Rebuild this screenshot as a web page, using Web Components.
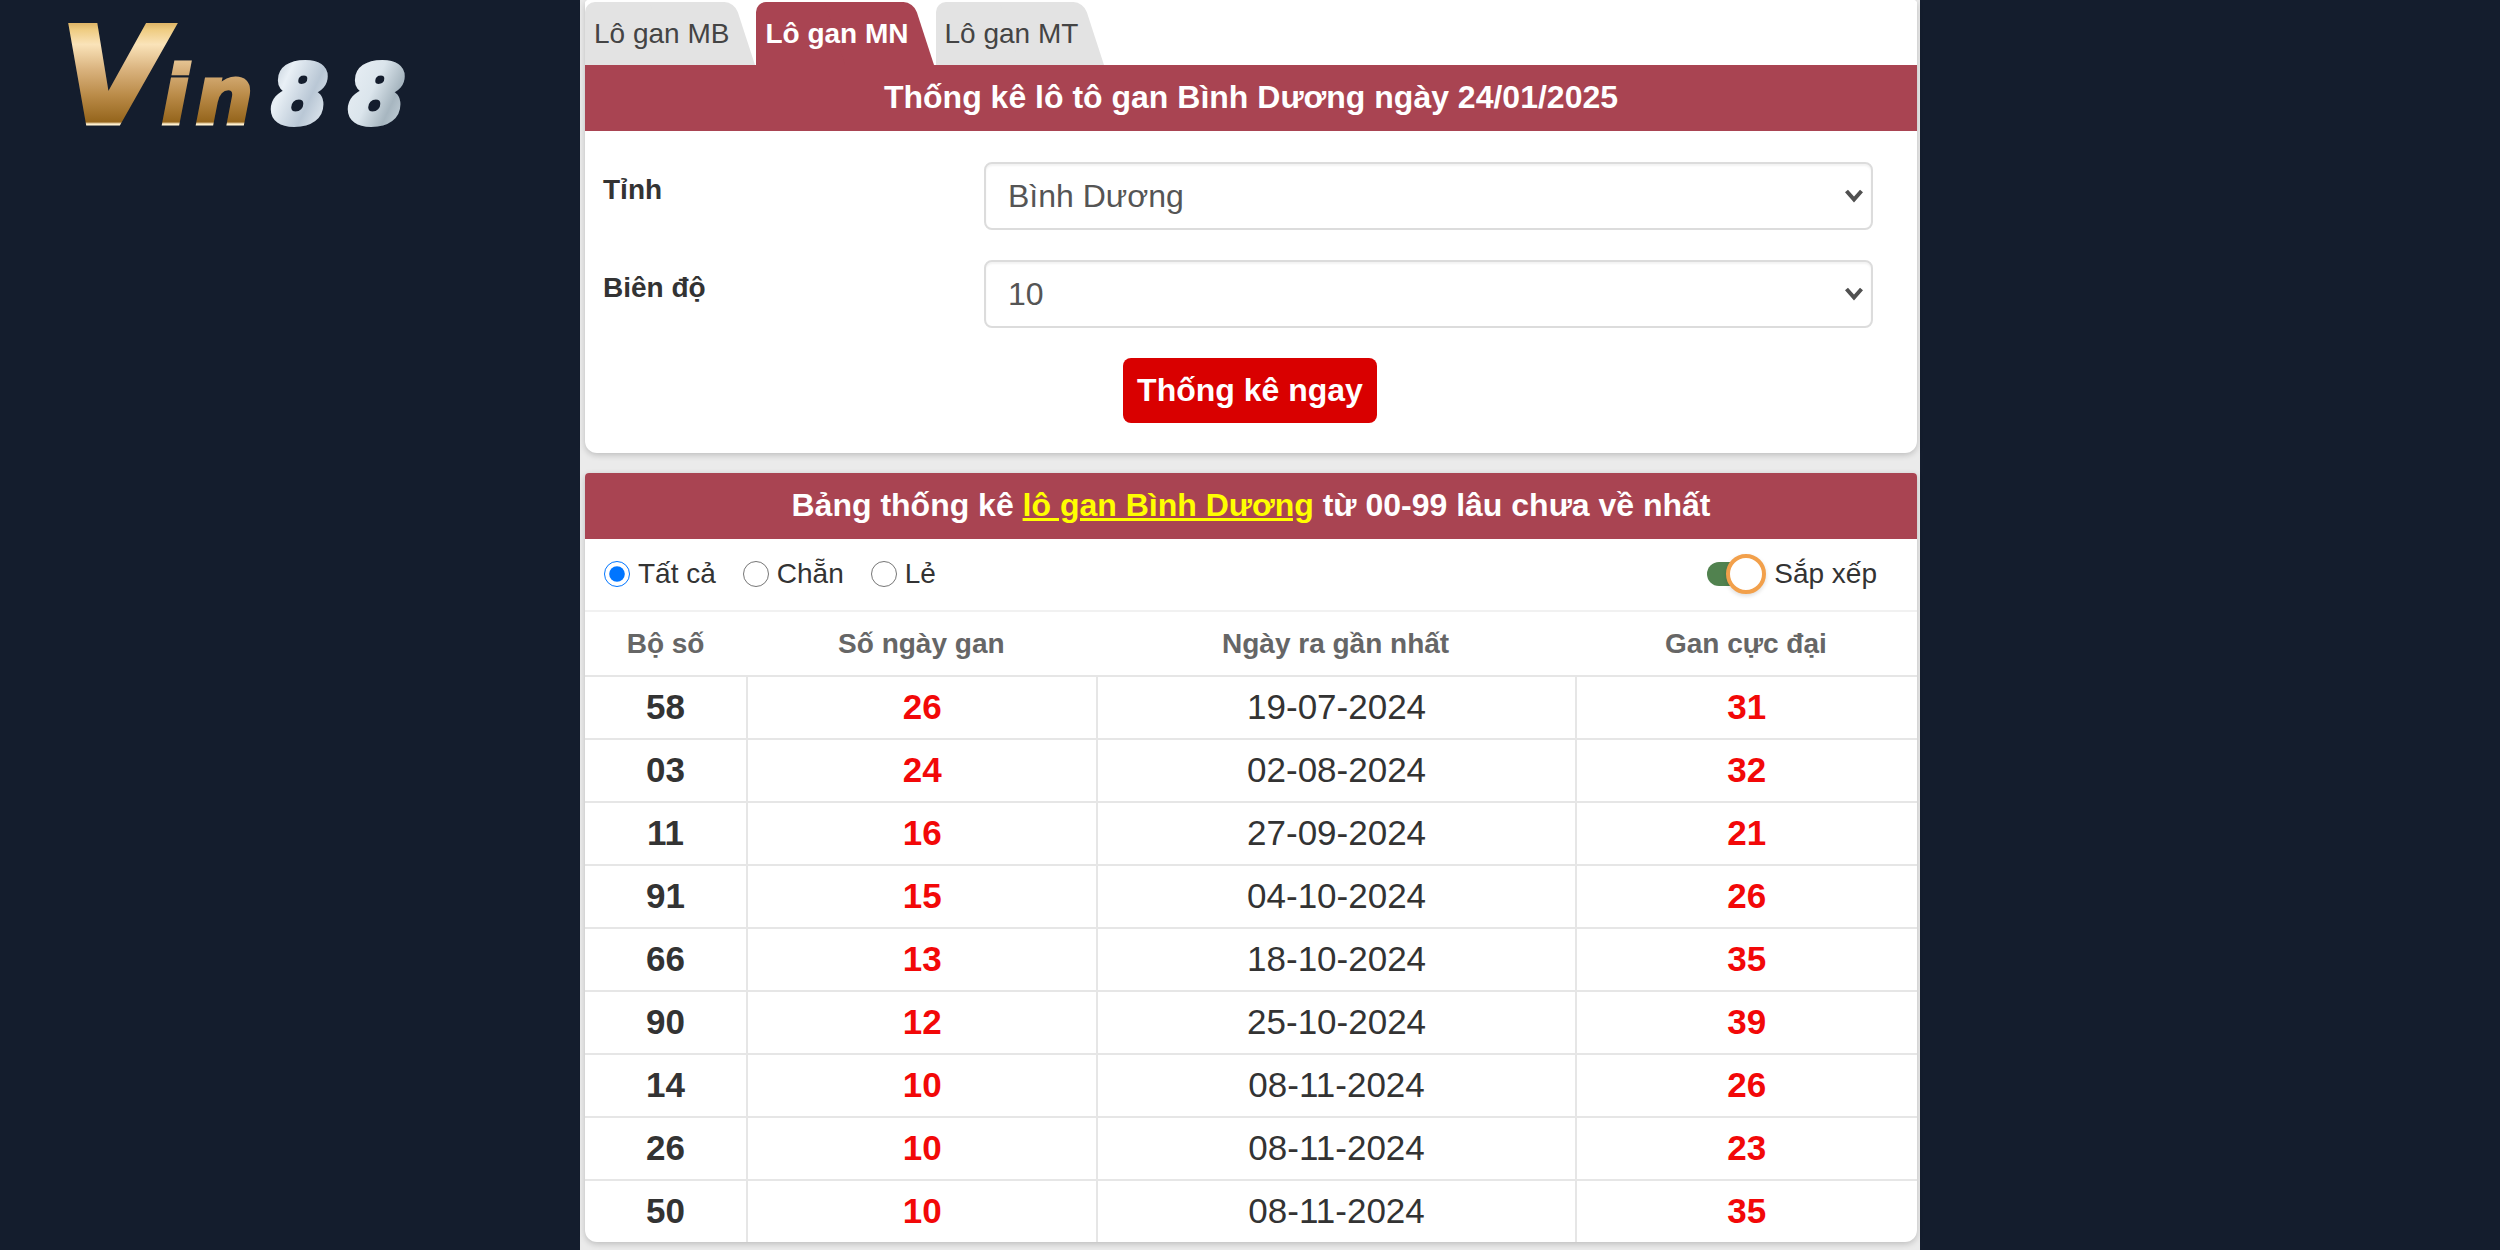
<!DOCTYPE html>
<html lang="vi">
<head>
<meta charset="utf-8">
<meta name="viewport" content="width=device-width, initial-scale=1">
<title>Thống kê lô tô gan Bình Dương</title>
<style>
  body { margin: 0; background: #141d2d; color: #333; font-family: "Liberation Sans", Arial, sans-serif; font-size: 28px; }
</style>
</head>
<body>
<lo-gan-page></lo-gan-page>

<script>
const define = (name, html, setup) => {
  const template = document.createElement('template');
  template.innerHTML = `<style>*, ::before, ::after { box-sizing: border-box; }</style>` + html;
  customElements.define(name, class extends HTMLElement {
    constructor() {
      super();
      this.attachShadow({ mode: 'open' }).append(template.content.cloneNode(true));
    }
    connectedCallback() {
      if (setup && !this.ready) { this.ready = true; setup(this, this.shadowRoot); }
    }
  });
};

define('brand-logo', `
  <style>
    :host { display: block; }
    a { display: block; }
    svg { display: block; overflow: visible; }
    text { font-family: "DejaVu Sans", sans-serif; font-weight: bold; font-style: oblique; }
  </style>
  <a href="#" aria-label="Vin88">
    <svg width="356" height="102" viewBox="0 0 356 102">
      <defs>
        <linearGradient id="gold" gradientUnits="userSpaceOnUse" x1="0" y1="0" x2="0" y2="102">
          <stop offset="0" stop-color="#dfb76a"/><stop offset=".06" stop-color="#efcd83"/>
          <stop offset=".2" stop-color="#fae3b9"/><stop offset=".45" stop-color="#d9b27d"/>
          <stop offset=".7" stop-color="#ba8b48"/><stop offset=".96" stop-color="#95651c"/>
          <stop offset=".98" stop-color="#fff0cf"/>
        </linearGradient>
        <linearGradient id="silver" gradientUnits="userSpaceOnUse" x1="200" y1="40" x2="350" y2="110">
          <stop offset="0" stop-color="#aebcc9"/><stop offset=".16" stop-color="#e9f0f6"/>
          <stop offset=".34" stop-color="#b9c7d5"/><stop offset=".5" stop-color="#e6edf3"/>
          <stop offset=".66" stop-color="#dbe5ec"/><stop offset=".8" stop-color="#a7b6c0"/>
          <stop offset="1" stop-color="#dce6ee"/>
        </linearGradient>
      </defs>
      <g fill="url(#gold)" stroke="url(#gold)">
        <text x="-3" y="99" font-size="134" stroke-width="5">V</text>
        <text x="97 131" y="100" font-size="82" stroke-width="3">in</text>
      </g>
      <text x="208 285" y="99" font-size="80" fill="url(#silver)" stroke="url(#silver)" stroke-width="6" stroke-linejoin="round">88</text>
    </svg>
  </a>`);

define('region-tab', `
  <style>
    :host { display: block; --fill: #e3e3e3; color: #444; }
    :host([active]) { --fill: #a94452; font-weight: bold; color: #fff; }
    a { display: block; position: relative; isolation: isolate; height: 63px; padding: 0 26px 0 9px;
        line-height: 64px; color: inherit; text-decoration: none; white-space: nowrap; }
    a::before, a::after { content: ""; position: absolute; z-index: -1; inset: 0 40px 0 0; background: var(--fill); border-radius: 10px 0 0 0; }
    a::after { inset: 0 0 0 50%; border-radius: 0 10px 0 0; transform: skewX(18deg); transform-origin: bottom right; }
  </style>
  <a href="#"><slot></slot></a>`);

define('title-bar', `
  <style>
    :host { display: block; }
    h2 { margin: 0; height: 66px; line-height: 64px; font-size: 32px; text-align: center; color: #fff; background: #a94452; }
    ::slotted(a) { color: #ff0; }
  </style>
  <h2><slot></slot></h2>`);

define('panel-card', `
  <style>
    :host { display: block; background: #fff; border-radius: 4px 4px 12px 12px; overflow: hidden; box-shadow: 0 2px 6px #0003; }
  </style>
  <slot></slot>`);

define('select-field', `
  <style>
    :host { display: grid; grid-template-columns: 3fr 7fr; align-items: start; }
    label { padding-top: 7px; line-height: 42px; font-weight: bold; }
    .box { display: grid; align-items: center; }
    select, svg { grid-area: 1 / 1; }
    select { appearance: none; width: 100%; height: 68px; padding: 0 22px; border: 2px solid #dcdcdc; border-radius: 8px;
             background: #fff; box-shadow: inset 0 2px 2px #0000000d; font-family: inherit; font-size: 32px; color: #555; }
    svg { justify-self: end; margin-right: 10px; pointer-events: none; }
  </style>
  <label for="field"></label>
  <div class="box">
    <select id="field"></select>
    <svg width="18" height="14" viewBox="0 0 18 14" fill="none" stroke="#505050" stroke-width="4"><path d="M1.5 2 9 10.5 16.5 2"/></svg>
  </div>`,
  (host, root) => {
    root.querySelector('label').textContent = host.getAttribute('label');
    root.querySelector('select').append(new Option(host.getAttribute('value')));
  });

define('search-form', `
  <style>
    :host { display: block; }
    form { display: flex; flex-direction: column; gap: 30px; padding: 31px 44px 30px 18px; }
    button { align-self: center; margin-left: 24px; height: 65px; padding: 0 14px; border: 0; border-radius: 8px; background: #d90000;
             color: #fff; font-family: inherit; font-weight: bold; font-size: 32px; }
  </style>
  <form>
    <select-field label="Tỉnh" value="Bình Dương"></select-field>
    <select-field label="Biên độ" value="10"></select-field>
    <button type="button">Thống kê ngay</button>
  </form>`);

define('filter-bar', `
  <style>
    :host { display: flex; justify-content: space-between; align-items: center; height: 73px; padding: 0 40px 2px 19px; border-bottom: 2px solid #f1f1f1; }
    .group { display: flex; gap: 27px; }
    label { display: flex; align-items: center; gap: 8px; }
    input { margin: 0; }
    [type=radio] { width: 26px; height: 26px; }
    .switch { display: grid; align-items: center; }
    .switch > * { grid-area: 1 / 1; }
    [type=checkbox] { appearance: none; height: 24px; width: 46px; background: #51824f; border-radius: 12px; }
    .knob { width: 40px; height: 40px; margin-left: 19px; border: 4px solid #f2a04b; border-radius: 50%; background: #fff; box-shadow: 0 2px 4px #0002; pointer-events: none; }
  </style>
  <div class="group">
    <label><input type="radio" name="kind" checked>Tất cả</label>
    <label><input type="radio" name="kind">Chẵn</label>
    <label><input type="radio" name="kind">Lẻ</label>
  </div>
  <label><span class="switch"><input type="checkbox" checked><span class="knob"></span></span>Sắp xếp</label>`);

define('gan-table', `
  <style>
    :host { display: block; }
    table { width: 100%; border-collapse: separate; border-spacing: 0; table-layout: fixed; text-align: center; }
    .c1 { width: 12.1%; } .c2 { width: 26.3%; } .c3 { width: 35.9%; }
    th, td { padding: 0; }
    thead th { height: 63px; color: #666; font-size: 28px; }
    tbody th, td { height: 63px; padding-bottom: 2px; border-top: 2px solid #e6e6e6; font-size: 35px; }
    td { border-left: 2px solid #e6e6e6; }
    td.hot { font-weight: bold; color: #f20808; }
  </style>
  <table>
    <colgroup><col class="c1"><col class="c2"><col class="c3"><col></colgroup>
    <thead><tr><th>Bộ số</th><th>Số ngày gan</th><th>Ngày ra gần nhất</th><th>Gan cực đại</th></tr></thead>
    <tbody></tbody>
  </table>`,
  (host, root) => {
    const rows = [
      ['58', '26', '19-07-2024', '31'], ['03', '24', '02-08-2024', '32'], ['11', '16', '27-09-2024', '21'],
      ['91', '15', '04-10-2024', '26'], ['66', '13', '18-10-2024', '35'], ['90', '12', '25-10-2024', '39'],
      ['14', '10', '08-11-2024', '26'], ['26', '10', '08-11-2024', '23'], ['50', '10', '08-11-2024', '35']];
    root.querySelector('tbody').innerHTML = rows.map(([n, days, date, max]) =>
      `<tr><th scope="row">${n}</th><td class="hot">${days}</td><td>${date}</td><td class="hot">${max}</td></tr>`).join('');
  });

define('lo-gan-page', `
  <style>
    :host { display: grid; grid-template-columns: 232fr 536fr 232fr; min-height: 100vh; }
    brand-logo { padding: 24px 0 0 64px; }
    main { display: flex; flex-direction: column; gap: 20px; padding: 0 3px 7px 5px; background: #ebebeb; }
    nav { display: flex; gap: 1px; padding-top: 2px; background: #fff; }
  </style>
  <brand-logo></brand-logo>
  <main>
    <panel-card>
      <nav>
        <region-tab>Lô gan MB</region-tab>
        <region-tab active>Lô gan MN</region-tab>
        <region-tab>Lô gan MT</region-tab>
      </nav>
      <title-bar>Thống kê lô tô gan Bình Dương ngày 24/01/2025</title-bar>
      <search-form></search-form>
    </panel-card>
    <panel-card>
      <title-bar>Bảng thống kê <a href="#">lô gan Bình Dương</a> từ 00-99 lâu chưa về nhất</title-bar>
      <filter-bar></filter-bar>
      <gan-table></gan-table>
    </panel-card>
  </main>`);
</script>
</body>
</html>
